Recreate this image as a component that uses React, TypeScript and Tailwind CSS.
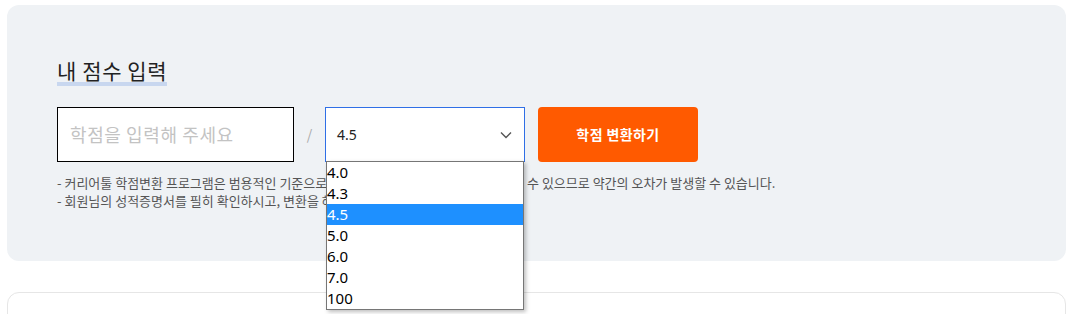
import React from "react";

/* ---------- Data ---------- */
const scales = ["4.0", "4.3", "4.5", "5.0", "6.0", "7.0", "100"];
const kr = "font-['Noto_Sans_CJK_KR','Noto_Sans',sans-serif]";

/* ---------- Select (open state) ---------- */

const ScaleSelect = ({ value }: { value: string }) => (
  <div className="relative w-[200px] h-[55px]">
    <div className="flex items-center justify-between h-full px-[11px] bg-white border border-[#2f6fe6]">
      <span className="text-[14px] text-[#222] font-['Noto_Sans',sans-serif]">{value}</span>
      <svg width="12" height="8" viewBox="0 0 12 8" className="mr-[1px]">
        <path d="M1 1.5 L6 6.5 L11 1.5" fill="none" stroke="#555" strokeWidth="1.4" />
      </svg>
    </div>

    {/* native list popup */}
    <ul className="absolute left-[1px] top-[calc(100%-1px)] w-[198px] bg-white border border-[#767676] shadow-[2px_2px_4px_rgba(0,0,0,0.25)] z-10 font-['Noto_Sans',sans-serif]">
      {scales.map((s) => (
        <li
          key={s}
          className={`h-[21px] leading-[21px] text-[15px] ${
            s === value ? "bg-[#1e90ff] text-white" : "text-black"
          }`}
        >
          {s}
        </li>
      ))}
    </ul>
  </div>
);

/* ---------- Main ---------- */

export default function App() {
  return (
    <div className={`w-[1070px] h-[314px] bg-white overflow-hidden ${kr}`}>
      <section className="mx-[7px] mt-[5px] w-[1059px] h-[256px] rounded-[12px] bg-[#eff2f5] pl-[50px] pt-[49px]">
        <h2 className="h-[32px] leading-[32px] text-[21px] tracking-[0.6px] text-[#222]">
          <span className="shadow-[inset_0_-4px_0_#c8d7ef] pb-[1px]">내 점수 입력</span>
        </h2>

        <div className="flex items-center mt-[21px]">
          <div className="w-[237px] h-[55px] bg-white border border-black flex items-center px-[12px]">
            <span className="text-[18px] tracking-[0.6px] text-[#c3c3c3]">학점을 입력해 주세요</span>
          </div>
          <span className="w-[31px] text-center text-[14px] text-[#aaa]">/</span>
          <ScaleSelect value="4.5" />
          <button className="ml-[13px] w-[160px] h-[55px] rounded-[4px] bg-[#ff5a00] text-white text-[14px] tracking-[0.4px] font-bold">
            학점 변환하기
          </button>
        </div>

        <div className="mt-[12px] text-[13px] leading-[18px] text-[#555]">
          <p>- 커리어툴 학점변환 프로그램은 범용적인 기준으로 제작되어 각 학교의 실제 기준과 다를 수 있으므로 약간의 오차가 발생할 수 있습니다.</p>
          <p>- 회원님의 성적증명서를 필히 확인하시고, 변환을 해주시기 바랍니다.</p>
        </div>
      </section>

      <div className="mx-[7px] mt-[31px] w-[1059px] h-[60px] rounded-[12px] border border-[#e6e6e6] bg-white" />
    </div>
  );
}
